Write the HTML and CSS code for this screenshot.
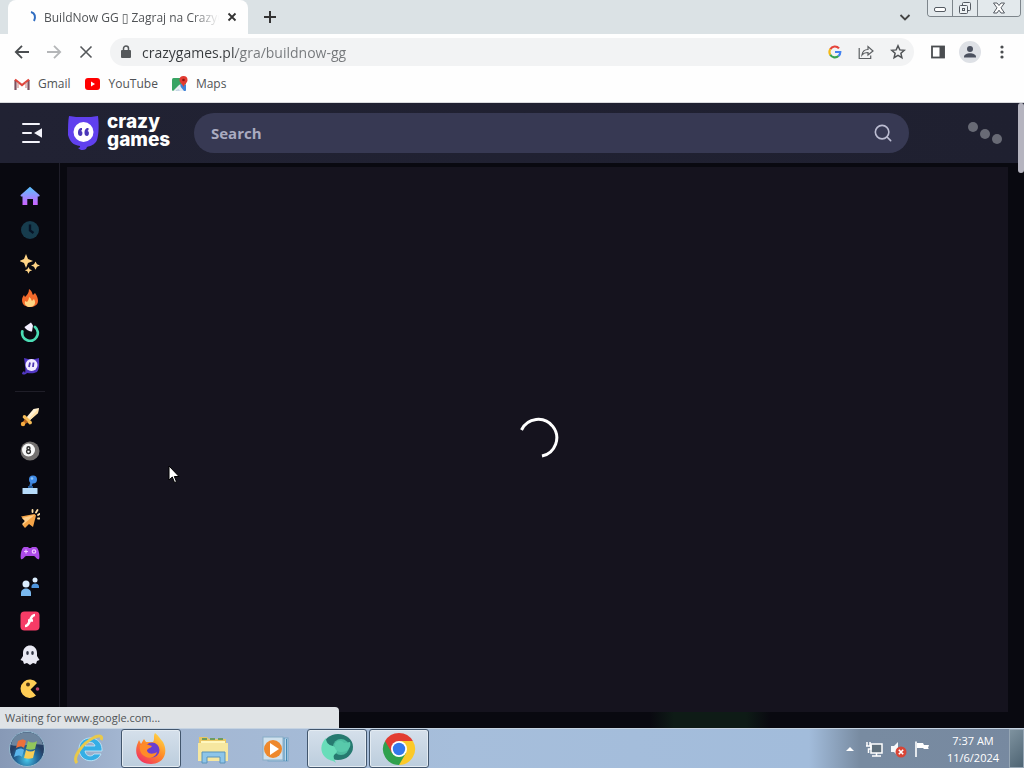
FILE: index.html
```html
<!DOCTYPE html>
<html lang="en">
<head>
<meta charset="utf-8">
<title>BuildNow GG</title>
<link rel="stylesheet" href="styles.css">
</head>
<body>
<div class="desktop">
  <div class="browser">
    <div class="tabstrip">
      <div class="tab">
        <svg class="tab-spinner" width="10" height="14" viewBox="0 0 10 14" fill="none" stroke="#2f6cc0" stroke-width="2"><path d="M3 2C7 3 8 7 6 11"/></svg>
        <span class="tab-title">BuildNow GG ▯ Zagraj na CrazyGames</span>
        <button class="icon-btn tab-close" aria-label="Close tab"><svg width="10" height="10" viewBox="0 0 10 10" stroke="#333" stroke-width="1.8"><path d="M1.5 1.5l7 7M8.500 1.500l-7 7"/></svg></button>
      </div>
      <button class="icon-btn new-tab" aria-label="New tab"><svg width="14" height="14" viewBox="0 0 14 14" stroke="#333" stroke-width="2"><path d="M7 1v12M1 7h12"/></svg></button>
      <button class="icon-btn tab-search" aria-label="Search tabs"><svg width="12" height="12" viewBox="0 0 12 12" fill="none" stroke="#444" stroke-width="1.800"><path d="M1.500 4L6 8.500 10.500 4"/></svg></button>
      <div class="caption">
        <button class="cap-btn" aria-label="Minimize"><svg width="14" height="12" viewBox="0 0 14 12" fill="#fff" stroke="#555b62"><rect x="1.500" y="5.500" width="11" height="4" rx="1.500"/></svg></button>
        <button class="cap-btn" aria-label="Restore"><svg width="14" height="14" viewBox="0 0 14 14" fill="#eef2f4" stroke="#555b62"><rect x="4.500" y="1.500" width="8" height="8" rx="1"/><rect x="1.500" y="4.500" width="8" height="8" rx="1"/><rect x="4.500" y="7.500" width="2" height="2"/></svg></button>
        <button class="cap-btn cap-close" aria-label="Close window"><svg width="14" height="12" viewBox="0 0 14 12" fill="#fff" stroke="#555b62"><path d="M1.500 1h3.500L7 3.500 9 1h3.500L9 5.800l3.500 5.200H9L7 8.200 5 11H1.500L5 5.800z"/></svg></button>
      </div>
    </div>
    <div class="toolbar">
      <button class="icon-btn nav-btn" aria-label="Back"><svg width="16" height="16" viewBox="0 0 16 16" fill="none" stroke="#4a4d50" stroke-width="1.800"><path d="M15 8H2M8 1.800L1.800 8 8 14.200"/></svg></button>
      <button class="icon-btn nav-btn" aria-label="Forward"><svg width="16" height="16" viewBox="0 0 16 16" fill="none" stroke="#b4b6b8" stroke-width="1.800"><path d="M1 8h13M8 1.800L14.200 8 8 14.200"/></svg></button>
      <button class="icon-btn nav-btn" aria-label="Stop"><svg width="16" height="16" viewBox="0 0 16 16" stroke="#55585b" stroke-width="1.600"><path d="M2.500 2.500l11 11M13.500 2.500l-11 11"/></svg></button>
      <div class="omnibox">
        <svg width="10" height="14" viewBox="0 0 10 14"><rect x="0" y="5" width="10" height="8" rx="1" fill="#55585b"/><path d="M2.500 6V3.500a2.500 2.500 0 015 0V6" fill="none" stroke="#55585b" stroke-width="1.500"/></svg>
        <input class="url" type="text" aria-label="Address" value="crazygames.pl/gra/buildnow-gg">
        <button class="icon-btn" aria-label="Google"><svg width="14" height="14" viewBox="0 0 14 14" fill="none" stroke-width="2.200"><path d="M2.300 4.200A5.300 5.300 0 0111 3.400" stroke="#e5443a"/><path d="M2.300 9.800a5.300 5.300 0 010-5.600" stroke="#f5b916"/><path d="M10.500 11a5.300 5.300 0 01-8.200-1.200" stroke="#36a552"/><path d="M7 7h5.300a5.300 5.300 0 01-1.800 4" stroke="#4383f2"/></svg></button>
        <button class="icon-btn" aria-label="Share"><svg width="16" height="16" viewBox="0 0 16 16" fill="none" stroke="#5c5f62" stroke-width="1.200"><path d="M1.200 4v10.500h11.500V11.500M4 11c.5-4 3-5.500 6-5.500V2.500L15 7l-5 4V8.500C7.500 8.500 5.500 9 4 11z"/></svg></button>
        <button class="icon-btn" aria-label="Bookmark"><svg width="16" height="16" viewBox="0 0 16 16" fill="none" stroke="#505356" stroke-width="1.500"><path d="M8 1.800l1.800 4.100 4.500.4-3.400 3 1 4.400L8 11.400l-3.900 2.300 1-4.400-3.400-3 4.500-.4z"/></svg></button>
      </div>
      <div class="tools">
        <button class="icon-btn" aria-label="Side panel"><svg width="16" height="16" viewBox="0 0 16 16"><rect x="2" y="2.500" width="12" height="11" fill="#fff" stroke="#4a4d50" stroke-width="1.800"/><rect x="9.500" y="2" width="5" height="12" fill="#4a4d50"/></svg></button>
        <button class="icon-btn" aria-label="Profile"><svg width="22" height="22" viewBox="0 0 22 22"><circle cx="11" cy="11" r="11" fill="#dee1e6"/><circle cx="11" cy="8" r="3" fill="#4c5260"/><path d="M5 16c0-5 12-5 12 0v.5H5z" fill="#4c5260"/></svg></button>
        <button class="icon-btn" aria-label="Menu"><svg width="16" height="16" viewBox="0 0 16 16" fill="#4a4d50"><circle cx="8" cy="3" r="1.600"/><circle cx="8" cy="8" r="1.600"/><circle cx="8" cy="13" r="1.600"/></svg></button>
      </div>
    </div>
    <div class="bookmarks">
      <a class="bookmark" href="#"><svg width="16" height="14" viewBox="0 0 16 14" fill="none" stroke-width="2.200"><path d="M1.500 13V3" stroke="#7d5260"/><path d="M14.500 13V3" stroke="#7d5260"/><path d="M1 2.500L8 8l7-5.500" stroke="#e0453c"/><path d="M4 5v6M12 5v6" stroke="#c77a76" stroke-width="1"/></svg>Gmail</a>
      <a class="bookmark" href="#"><svg width="16" height="14" viewBox="0 0 16 14"><rect y="1" width="15" height="12" rx="3" fill="#f00"/><path d="M6 4.500v5L10 7z" fill="#fff"/></svg>YouTube</a>
      <a class="bookmark" href="#"><svg width="16" height="16" viewBox="0 0 16 16"><rect y="2" width="14" height="13" rx="1.500" fill="#38a463"/><path d="M8 9l3-3 3 3v6H4z" fill="#c9d8ea"/><path d="M14 9v5a1 1 0 01-1 1h-3L7 10l2-2z" fill="#3f83d8"/><path d="M1 15l6.500-6.500L9 10l-5 5zM8 15l-2-3 2-2 4 5z" fill="#e8edf2"/><path d="M11.500 11C10 7.500 7.500 7 7.500 4a4 4 0 018 0c0 3-2.500 3.500-4 7z" fill="#e23b31"/><circle cx="11.500" cy="4" r="1.300" fill="#8d1712"/></svg>Maps</a>
    </div>
    <div class="site">
      <header class="site-header">
        <button class="icon-btn menu-btn" aria-label="Close menu"><svg width="22" height="22" viewBox="0 0 22 22" stroke="#f3f3fa" stroke-width="2" stroke-linecap="round"><path d="M3 2h16M3 11h8M3 20h16"/><path d="M21 8v6l-5-3z" fill="#f3f3fa"/></svg></button>
        <a class="logo" href="#" aria-label="CrazyGames">
          <svg width="32" height="36" viewBox="0 0 32 36"><path d="M1 1c3 0 5 1 7 1h15c2 0 4-1 7-1 1 8 1 18-1 24-2 5-7 6-10 7l-1 2c-3 2-6 1-8-1 2 0 2-1 2-2C5 30 2 27 0 20 0 13 0 6 1 1z" fill="#6040ee"/><circle cx="15.500" cy="17" r="10" fill="#fff"/><path d="M10 18c0-3 1-5 4-5v2l-1 1c2 0 2 5-.5 5C11 21 10 20 10 18zM16.500 18c0-3 1-5 4-5v2l-1 1c2 0 2 5-.5 5-1.500 0-2.500-1-2.500-3z" fill="#4a36b8"/></svg>
          <span class="logo-text"><span>crazy</span><span>games</span></span>
        </a>
        <div class="search">
          <input class="search-input" type="text" placeholder="Search" aria-label="Search">
          <button class="icon-btn" aria-label="Submit search"><svg width="18" height="18" viewBox="0 0 20 20" fill="none" stroke="#bcbdd2" stroke-width="1.800" stroke-linecap="round"><circle cx="9" cy="9" r="7.500"/><path d="M14.500 14.500l4 4"/></svg></button>
        </div>
        <svg class="loading-dots" width="36" height="24" viewBox="0 0 36 24" fill="#686a75"><circle cx="6" cy="6" r="5"/><circle cx="18" cy="13" r="5"/><circle cx="30" cy="18" r="5"/></svg>
      </header>
      <div class="site-body">
        <nav class="sidebar" aria-label="Categories">
          <a href="#" aria-label="Home"><svg width="20" height="20" viewBox="0 0 20 20"><defs><linearGradient id="home" x2="0" y2="1"><stop offset=".1" stop-color="#62bbff"/><stop offset=".9" stop-color="#c468ff"/></linearGradient></defs><path d="M10 .8L19.500 9c.4.800 0 1.500-1 1.500h-.8V19h-4.700v-6H7.300v6H2.500v-8.500h-.8c-1 0-1.400-.7-1-1.500z" fill="url(#home)"/></svg></a>
          <a href="#" aria-label="Recently played"><svg width="20" height="20" viewBox="0 0 20 20"><circle cx="10" cy="10" r="9" fill="#173c4d"/><path d="M10 4.500v6l3.500 2.500" fill="none" stroke="#071426" stroke-width="2.400"/></svg></a>
          <a href="#" aria-label="New"><svg width="20" height="20" viewBox="0 0 20 20" fill="#ffd486"><path d="M6 0l2 5 5 2-5 2-2 5-2-5-4.500-2L4 5zM15.500 7.500l1.500 2.800 3 1.200-3 1.200-1.500 3-1.500-3-3-1.200 3-1.200zM8.500 13l1.200 2.200 2.500 1-2.500 1-1.200 2.500-1.200-2.500-2.500-1 2.500-1z"/></svg></a>
          <a href="#" aria-label="Trending"><svg width="20" height="20" viewBox="0 0 20 20"><path d="M9 1c4 3 3 5 4 6l2-2c2 3 3 5 3 8 0 4-4 6-8 6s-8-2-8-7c0-2 1-4 2-5l1 2c2-2 4-4 4-8z" fill="#f36a2b"/><path d="M9 9c3 2 2 3 3 4l2-2c3 5-1 8-4 8s-6-2-5-6l2 1c1-1 2-3 2-5z" fill="#ffd583"/></svg></a>
          <a href="#" aria-label="Updated"><svg width="20" height="20" viewBox="0 0 20 20"><path d="M2.300 9.500A7.800 7.800 0 1015 5" fill="none" stroke="#4bdcb4" stroke-width="2.800" stroke-linecap="round"/><path d="M4.500 5L11 .5l2 3-1 6c-2.500 0-6.500-2-7.500-4.500z" fill="#f3eeff"/></svg></a>
          <a href="#" aria-label="Originals"><svg width="20" height="20" viewBox="0 0 20 20"><path d="M4 2l4 1h7l4-1c0 5 1 10-2 14-4 2-7 1-10 1-2 2-5 2-5 0l2-2 1 2c1-2 0-8-1-15z" fill="#5137c2"/><circle cx="11.500" cy="9" r="6" fill="#f0eaff"/><path d="M10 6.500L9 11M13.500 6.500L13 11" stroke="#4c35b0" stroke-width="1.800"/></svg></a>
          <hr class="divider">
          <a href="#" aria-label="Action"><svg width="20" height="20" viewBox="0 0 20 20"><path d="M5.500 11.500L13.500 2l5.500-1-1 5-9 8z" fill="#fff1d3"/><path d="M8 13L18.500 1.500 18 6l-9 8z" fill="#ffe0a6"/><path d="M3 8.500l2-.5 7 7-.5 2-2 .5-6.800-7z" fill="#f6bd58"/><path d="M5 12l3 3-4 3-2-2z" fill="#bf6a21"/><circle cx="3" cy="17" r="2.200" fill="#f7ad41"/></svg></a>
          <a href="#" aria-label="Pool"><svg width="20" height="20" viewBox="0 0 20 20"><circle cx="10" cy="10" r="9.500" fill="#73706f"/><circle cx="8.500" cy="9" r="6.500" fill="#f8f8f8"/><g fill="none" stroke="#333" stroke-width="1.400"><circle cx="8.500" cy="7.200" r="1.500"/><circle cx="8.500" cy="10.600" r="1.900"/></g></svg></a>
          <a href="#" aria-label="Arcade"><svg width="20" height="20" viewBox="0 0 20 20"><path d="M12 6l-2 7" stroke="#3c79c8" stroke-width="2.500"/><circle cx="13" cy="4.500" r="4" fill="#418be5"/><circle cx="12" cy="3.500" r="1.300" fill="#8bc6ff"/><path d="M8 11h5v3H8z" fill="#245997"/><rect x="2.500" y="13" width="15" height="6" rx=".5" fill="#b7dcfa"/></svg></a>
          <a href="#" aria-label="Clicker"><svg width="20" height="20" viewBox="0 0 20 20"><path d="M1 7.500L14.500 5 16 6.500 13 18l-4-3-4 4-2.500-3 2.500-4z" fill="#f5a447"/><path d="M14.500 6L5 14l-2 2-1-1 3-3-3-3z" fill="#ffd08b"/><path d="M12.500 3V1M16 3.500L17.500 1M18 6l1.500-1M18 9.500h1.500" stroke="#ffe0a6" stroke-width="1.800" stroke-linecap="round"/></svg></a>
          <a href="#" aria-label="Controller"><svg width="20" height="20" viewBox="0 0 20 20"><path d="M4 4h4l1 1h2l1-1h4c3 1 4 10 3 12-2 1-3-2-5-3H6c-2 1-3 4-5 3C0 14 1 5 4 4z" fill="#ac4be8"/><g fill="none" stroke="#efc5ff" stroke-width="1.200"><path d="M4 8.500h4M6 6.500v4"/><circle cx="14" cy="8.500" r="1.700"/></g></svg></a>
          <a href="#" aria-label="Multiplayer"><svg width="20" height="20" viewBox="0 0 20 20"><circle cx="6" cy="7" r="3.500" fill="#dceeff"/><path d="M1 19v-3c0-6 10-6 10 0v3z" fill="#7ab9ef"/><circle cx="15" cy="3" r="2.500" fill="#dceeff"/><path d="M11.500 11V9.500c0-4 7.500-4 7.500 0V11z" fill="#4d94dc"/></svg></a>
          <a href="#" aria-label="Flash"><svg width="20" height="20" viewBox="0 0 20 20"><rect x=".5" y=".5" width="19" height="19" rx="4" fill="#f63c66"/><path d="M15 4c-6 0-4 11-10 11M8 9.500h5" fill="none" stroke="#fff" stroke-width="2.500"/></svg></a>
          <a href="#" aria-label="Horror"><svg width="20" height="20" viewBox="0 0 20 20"><path d="M3 11V8c0-10 14-10 14 0v3l2.500 4-2.500 1-1 3-3-1-3 2-3-2-3 1-1-3-2.500-1z" fill="#e9e9f3"/><ellipse cx="7.500" cy="8" rx="1.300" ry="2" fill="#333746"/><ellipse cx="12.500" cy="8" rx="1.300" ry="2" fill="#333746"/></svg></a>
          <a href="#" aria-label="Classics"><svg width="20" height="20" viewBox="0 0 20 20"><path d="M17 4l-6.500 6.500L16 16.500A9.200 9.200 0 1117 4z" fill="#ffcd55"/><circle cx="8" cy="5.500" r="2" fill="#4d3514"/><circle cx="17.500" cy="10" r="1.800" fill="#b8456b"/></svg></a>
        </nav>
        <main class="game">
          <svg class="spinner" width="44" height="44" viewBox="0 0 44 44" fill="none" stroke="#fff" stroke-width="3"><path d="M5.500 14A18.500 18.500 0 1126 40"/></svg>
        </main>
      </div>
      <div class="scroll-thumb"></div>
      <div class="status">Waiting for www.google.com...</div>
      <svg class="cursor" width="12" height="19" viewBox="0 0 12 19"><path d="M1 1v14l3.300-3 2.200 5.500 2-.8-2.200-5.200H11z" fill="#fff" stroke="#000"/></svg>
    </div>
  </div>
  <footer class="taskbar">
    <button class="start" aria-label="Start"><svg width="38" height="38" viewBox="0 0 38 38"><defs><radialGradient id="orb" cy=".8"><stop stop-color="#48c9eb"/><stop offset=".6" stop-color="#25689a"/><stop offset="1" stop-color="#263f64"/></radialGradient></defs><circle cx="19" cy="19" r="17.500" fill="url(#orb)" stroke="#96bbd0"/><path d="M3 15C6-2 32-2 35 15c-9-3-23 3-32 0z" fill="#b4cbd7" opacity=".5"/><path d="M10 11c3-2 6-2 8 0l-2 7c-2-2-5-2-8 0z" fill="#ec713b"/><path d="M20 11c3 2 6 2 9 0l-2 8c-3 1-6 1-9 0z" fill="#92c65b"/><path d="M8 20c3-2 6-2 8 0l-2 7c-2-2-5-2-8 0z" fill="#5ab5eb"/><path d="M18 20c3 2 6 2 9 0l-2 8c-3 1-6 1-9 0z" fill="#f9cd56"/></svg></button>
    <div class="tasks">
      <button class="task" aria-label="Internet Explorer"><svg width="34" height="34" viewBox="0 0 34 34"><path d="M30 19H13c1 6 7 6 9 3h7c-5 11-22 8-22-5C7 2 31 2 30 19zM13 14h10c-1-5-9-5-10 0z" fill="#35aee5" stroke="#c9ecfb" stroke-width=".8"/><path d="M5 31c-5-5 5-20 18-26 5-2 8-1 6 3" fill="none" stroke="#e9c94b" stroke-width="3"/></svg></button>
      <button class="task active" aria-label="Firefox"><svg width="34" height="34" viewBox="0 0 34 34"><defs><linearGradient id="fox" x1=".9" x2=".2" y2="1"><stop stop-color="#ffe14b"/><stop offset=".5" stop-color="#ff8b27"/><stop offset="1" stop-color="#f12d65"/></linearGradient></defs><path d="M21 1c4 3 5 6 8 9 6 11 0 22-12 22C5 32 0 23 3 13l2-5 2 4 3-5 2 3h7c2-3 0-6 2-9z" fill="url(#fox)"/><circle cx="18" cy="18" r="7.500" fill="#6b3fd0"/><path d="M6 13c5-3 8 0 12 1-2 3-5 2-5 5 2 4 7 3 10 1-1 5-7 7-11 5-5-2-7-7-6-12z" fill="#ff8b28"/></svg></button>
      <button class="task" aria-label="File Explorer"><svg width="34" height="34" viewBox="0 0 34 34"><path d="M3 5h8l2 2h17v22H3z" fill="#e8c765"/><path d="M5 9h24v18H5z" fill="#fff7be"/><path d="M2 11h30v18H2z" fill="#f6e7a0"/><path d="M6 7h5M14 7h5M22 7h5" stroke="#6e9d62" stroke-width="2"/><path d="M6 31V20h23v11h-5v-6H11v6z" fill="#8dc5e9" stroke="#5a93ba"/></svg></button>
      <button class="task" aria-label="Media Player"><svg width="34" height="34" viewBox="0 0 34 34"><rect x="10" y="6" width="20" height="23" fill="#bcd8ec" stroke="#78a6c5"/><path d="M26 6v23M28.500 7v22" stroke="#468ab4"/><rect x="5" y="5" width="20" height="23" fill="#cfe1ed" stroke="#88adc7"/><circle cx="15" cy="17" r="9" fill="#ee882c"/><path d="M12 11v12l9-6z" fill="#fff"/></svg></button>
      <button class="task active" aria-label="Application"><svg width="34" height="34" viewBox="0 0 34 34"><ellipse cx="18" cy="15" rx="15" ry="13" fill="#267a70"/><circle cx="21" cy="15" r="8" fill="#4dbca0"/><path d="M6 6c-6 6-6 14-1 19 4 4 8 3 11 6-2-4-3-6-2-8 5-3 3-7-1-9-5-1-7-4-7-8z" fill="#68ddb9"/><path d="M15 12c2-4 7-4 9-1l6-1c2 5-3 11-10 10-4-1-6-4-5-8z" fill="#58c9ab"/></svg></button>
      <button class="task active" aria-label="Chrome"><svg width="34" height="34" viewBox="0 0 34 34"><path d="M17 17L3.100 9A16 16 0 0130.900 9z" fill="#e23c31"/><path d="M17 17L30.900 9A16 16 0 0117 33z" fill="#fbc928"/><path d="M17 17v16A16 16 0 013.100 9z" fill="#30a14d"/><path d="M17 9h13.900l-7 12z" fill="#fbc928"/><path d="M10 21L3.100 9 17 9z" fill="#e23c31"/><path d="M24 21l-7 12-7-12z" fill="#30a14d"/><circle cx="17" cy="17" r="8" fill="#fff"/><circle cx="17" cy="17" r="6.200" fill="#3478eb"/></svg></button>
    </div>
    <div class="tray">
      <button class="icon-btn" aria-label="Show hidden icons"><svg width="10" height="6" viewBox="0 0 10 6"><path d="M5 1l4 4H1z" fill="#fff"/></svg></button>
      <button class="icon-btn" aria-label="Network"><svg width="18" height="18" viewBox="0 0 18 18"><rect x="6" y="4" width="11" height="9" fill="#61717d" stroke="#fff" stroke-width="1.500"/><path d="M11.500 13v3M7 16h9M2 2v4M5 2v4M1 6h5v3H3.500v4" fill="none" stroke="#fff" stroke-width="1.500"/></svg></button>
      <button class="icon-btn" aria-label="Volume muted"><svg width="18" height="18" viewBox="0 0 18 18"><path d="M2 6h3l4-4v14l-4-4H2z" fill="#f6f8fa"/><circle cx="12" cy="12" r="5.500" fill="#d84536"/><path d="M9.800 9.800l4.400 4.400M14.200 9.800l-4.400 4.400" stroke="#fff" stroke-width="1.600"/></svg></button>
      <button class="icon-btn" aria-label="Action Center"><svg width="18" height="18" viewBox="0 0 18 18"><path d="M3 1.500V17" stroke="#fff" stroke-width="1.600"/><path d="M4 3h6l1 2h5l-1 3 1 1h-5l-1-1H4z" fill="#fff"/></svg></button>
      <div class="clock"><span>7:37 AM</span><span>11/6/2024</span></div>
      <button class="show-desktop" aria-label="Show desktop"></button>
    </div>
  </footer>
</div>
</body>
</html>
```
FILE: styles.css
```css
* { box-sizing: border-box; }
body {
  margin: 0;
  font-family: "Open Sans", "Noto Sans", "DejaVu Sans", sans-serif;
  font-size: 12px;
  color: #505356;
}
button, input { font: inherit; color: inherit; }
svg { display: block; flex: none; }
a { color: inherit; text-decoration: none; }
.desktop, .browser { display: flex; flex-direction: column; }
.desktop { height: 100vh; overflow: hidden; }
.browser { flex: 1; min-height: 0; background: #fefefe; }
.icon-btn {
  display: flex;
  align-items: center;
  justify-content: center;
  padding: 0;
  border: 0;
  background: none;
}

.tabstrip { display: flex; height: 34px; padding: 0 3px 0 8px; background: #dbe2e5; }
.tab {
  display: flex;
  align-items: center;
  width: 240px;
  padding: 0 11px 0 20px;
  border-radius: 8px 8px 0 0;
  background: #fefefe;
}
.tab-spinner { margin-right: 6px; }
.tab-title {
  flex: 1;
  min-width: 0;
  overflow: hidden;
  white-space: nowrap;
  mask-image: linear-gradient(to right, #000 85%, transparent);
}
.tab-close { margin-left: 8px; }
.new-tab { margin-left: 15px; }
.tab-search { margin-left: auto; margin-right: 16px; }
.caption {
  display: flex;
  height: 17px;
  border: 1px solid #7d858b;
  border-top: 0;
  border-radius: 0 0 4px 4px;
  overflow: hidden;
}
.cap-btn {
  display: flex;
  align-items: center;
  justify-content: center;
  width: 25px;
  padding: 0;
  border: 0;
  border-right: 1px solid #7d858b;
  background: #e3e9ec;
}
.cap-close { width: 42px; border-right: 0; }

.toolbar { display: flex; align-items: center; height: 36px; padding: 0 14px; }
.nav-btn { margin-right: 16px; }
.omnibox {
  display: flex;
  flex: 1;
  align-items: center;
  gap: 16px;
  height: 28px;
  margin-right: 16px;
  padding: 0 8px 0 11px;
  border-radius: 14px;
  background: #f2f3f4;
}
.url {
  flex: 1;
  min-width: 0;
  margin-left: -5px;
  padding: 0;
  border: 0;
  outline: 0;
  font-size: 14px;
  color: transparent;
  background: linear-gradient(to right, #36393c 94px, #74777a 94px);
  background-clip: text;
}
.tools { display: flex; align-items: center; gap: 13px; }
.bookmarks { display: flex; gap: 14px; height: 33px; padding: 0 14px 5px; border-bottom: 1px solid #d9dadd; }
.bookmark { display: flex; align-items: center; gap: 8px; }

.site {
  position: relative;
  display: flex;
  flex: 1;
  flex-direction: column;
  min-height: 0;
  background: #090910;
}
.site-header {
  display: flex;
  flex: none;
  align-items: center;
  height: 60px;
  padding: 0 21px 0 20px;
  background: linear-gradient(to right, #212233, #1f2030);
}
.menu-btn { margin-right: 26px; }
.logo { display: flex; align-items: center; gap: 7px; width: 126px; }
.logo-text {
  display: flex;
  flex-direction: column;
  padding-bottom: 4px;
  font-family: Inter, sans-serif;
  font-size: 19px;
  font-weight: 800;
  line-height: 18px;
  color: #fff;
}
.search {
  display: flex;
  flex: 1;
  align-items: center;
  height: 40px;
  padding: 0 17px;
  border-radius: 20px;
  background: #373953;
}
.search-input {
  flex: 1;
  min-width: 0;
  padding: 0;
  border: 0;
  outline: 0;
  background: none;
  font-size: 15px;
  font-weight: 700;
  color: #fff;
}
.search-input::placeholder { color: #aaabc0; }
.loading-dots { margin-left: 58px; }
.site-body { display: flex; flex: 1; min-height: 0; }
.sidebar {
  display: flex;
  flex: none;
  flex-direction: column;
  align-items: center;
  gap: 14px;
  width: 60px;
  padding-top: 23px;
  border-right: 1px solid #1f1e29;
  overflow: hidden;
}
.divider { flex: none; width: 30px; height: 1px; margin: 1px 0; border: 0; background: #1f1e28; }
.game {
  display: flex;
  flex: 1;
  align-items: center;
  justify-content: center;
  margin: 4px 16px 16px 7px;
  padding-bottom: 4px;
  background: #15131e;
}
.scroll-thumb {
  position: absolute;
  top: 0;
  right: 0;
  width: 6px;
  height: 70px;
  border-radius: 3px;
  background: #b5b4bf;
}
.status {
  position: absolute;
  bottom: 0;
  left: 0;
  width: 339px;
  height: 21px;
  padding-left: 5px;
  border-radius: 0 4px 0 0;
  background: #dfe3e6;
  font-size: 11px;
  line-height: 21px;
}
.cursor { position: absolute; top: 362px; left: 168px; }
.site::after {
  content: "";
  position: absolute;
  bottom: 0;
  left: 650px;
  width: 120px;
  height: 16px;
  background: linear-gradient(to right, transparent, #0e1b16 20%, #0e1b16 80%, transparent);
}

.taskbar {
  display: flex;
  flex: none;
  align-items: center;
  height: 40px;
  border-top: 1px solid #c5d3e2;
  background: linear-gradient(to right, #8799b6, #a3b6d1 12%, #a6bedb 45%, #a2bcdb 79%, #788ba1 84%, #7789a0);
}
.start { width: 54px; height: 38px; padding: 0 8px; border: 0; background: none; }
.tasks { display: flex; gap: 2px; margin-left: 5px; }
.task {
  display: flex;
  align-items: center;
  justify-content: center;
  width: 60px;
  height: 39px;
  padding: 0;
  border: 1px solid transparent;
  border-radius: 3px;
  background: none;
}
.task.active {
  border-color: #42566d;
  background: linear-gradient(to bottom, #d5e0eb, #bccddd);
  box-shadow: inset 0 0 0 1px #e3ebf2;
}
.tray { display: flex; align-items: center; margin-left: auto; height: 100%; color: #fff; }
.tray .icon-btn { margin-right: 6px; }
.tray .icon-btn:first-child { margin-right: 10px; }
.clock {
  display: flex;
  flex-direction: column;
  align-items: center;
  width: 72px;
  font-size: 11px;
  line-height: 17px;
}
.show-desktop {
  width: 15px;
  height: 100%;
  padding: 0;
  border: 1px solid #96a6b4;
  background: linear-gradient(135deg, #7e929f, #4e6473);
}
```
